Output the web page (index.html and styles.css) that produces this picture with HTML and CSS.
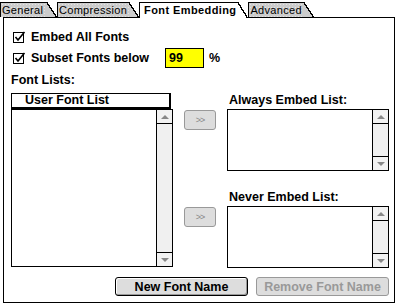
FILE: index.html
```html
<!DOCTYPE html>
<html lang="en">
<head>
    <meta charset="UTF-8">
    <title>Font Embedding</title>
    <link rel="stylesheet" href="styles.css">
</head>
<body>
    <div class="window">
        <div class="tabs">
            <div class="tab">General</div>
            <div class="tab">Compression</div>
            <div class="tab active">Font Embedding</div>
            <div class="tab">Advanced</div>
        </div>

        <div class="panel">
            <div class="check-row">
                <svg class="checkbox" width="13" height="13" viewBox="0 0 13 13">
                    <rect x="0.5" y="1.5" width="10" height="10" fill="#fff" stroke="#000"/>
                    <path d="M2.5 6 L5 9 L11.5 1" fill="none" stroke="#000" stroke-width="1.6"/>
                </svg>
                <span>Embed All Fonts</span>
            </div>
            <div class="check-row subset">
                <svg class="checkbox" width="13" height="13" viewBox="0 0 13 13">
                    <rect x="0.5" y="1.5" width="10" height="10" fill="#fff" stroke="#000"/>
                    <path d="M2.5 6 L5 9 L11.5 1" fill="none" stroke="#000" stroke-width="1.6"/>
                </svg>
                <span class="subset-label">Subset Fonts below</span>
                <span class="pct-field">99</span>
                <span class="pct">%</span>
            </div>

            <div class="section-label">Font Lists:</div>

            <div class="lists">
                <div class="col-left">
                    <div class="list-header">User Font List</div>
                    <div class="listbox tall">
                        <div class="list-body"></div>
                        <div class="scrollbar">
                            <div class="scroll-btn up"><span class="arrow"></span></div>
                            <div class="track"></div>
                            <div class="scroll-btn down"><span class="arrow"></span></div>
                        </div>
                    </div>
                </div>

                <div class="col-mid">
                    <button class="move">&gt;&gt;</button>
                    <button class="move second">&gt;&gt;</button>
                </div>

                <div class="col-right">
                    <div class="list-label">Always Embed List:</div>
                    <div class="listbox short">
                        <div class="list-body"></div>
                        <div class="scrollbar">
                            <div class="scroll-btn up"><span class="arrow"></span></div>
                            <div class="track"></div>
                            <div class="scroll-btn down"><span class="arrow"></span></div>
                        </div>
                    </div>
                    <div class="list-label never">Never Embed List:</div>
                    <div class="listbox short">
                        <div class="list-body"></div>
                        <div class="scrollbar">
                            <div class="scroll-btn up"><span class="arrow"></span></div>
                            <div class="track"></div>
                            <div class="scroll-btn down"><span class="arrow"></span></div>
                        </div>
                    </div>
                </div>
            </div>

            <div class="actions">
                <button class="push">New Font Name</button>
                <button class="push" disabled>Remove Font Name</button>
            </div>
        </div>
    </div>
</body>
</html>
```

FILE: styles.css
```css
body {
    margin: 0;
    padding: 0;
    background-color: #fff;
    font-family: "Liberation Sans", Arial, sans-serif;
    color: #000;
}

.window {
    width: 400px;
}

/* tab row */
.tabs {
    display: flex;
    align-items: flex-end;
    height: 18px;
    margin-bottom: -1px;
    position: relative;
    z-index: 1;
}

.tab {
    position: relative;
    box-sizing: border-box;
    height: 15px;
    margin-bottom: 1px;
    margin-right: 10px;
    padding: 0 2px 0 1px;
    border-top: 1px solid #000;
    border-left: 1px solid #000;
    font-size: 11px;
    line-height: 14px;
    letter-spacing: 0.3px;
    background-color: #cccccc;
    background-image: radial-gradient(#e4e4e4 0.7px, transparent 0.8px);
    background-size: 3px 3px;
    white-space: nowrap;
}

.tab::after {
    content: '';
    position: absolute;
    top: -1px;
    right: -10px;
    width: 10px;
    height: 15px;
    background: linear-gradient(to bottom left, #fff 48%, #000 48%, #000 56%, #cccccc 56%);
}

.tab:first-child {
    width: 47px;
}

.tab.active {
    height: 16px;
    margin-bottom: 0;
    padding-left: 4px;
    font-weight: bold;
    letter-spacing: 0.4px;
    background: #fff;
}

.tab.active::after {
    height: 16px;
    background: linear-gradient(to bottom left, #fff 48%, #000 48%, #000 56%, #fff 56%);
}

/* panel */
.panel {
    box-sizing: border-box;
    width: 392px;
    height: 286px;
    margin-left: 3px;
    padding: 0 5px 0 7px;
    border: 1px solid #000;
}

.check-row {
    display: flex;
    align-items: center;
    gap: 5px;
    height: 14px;
    margin-top: 12px;
    padding-left: 2px;
    font-size: 12.5px;
    font-weight: bold;
}

.check-row.subset {
    height: 20px;
    margin-top: 4px;
}

.checkbox {
    flex: none;
}

.subset-label {
    width: 129px;
}

.pct-field {
    box-sizing: border-box;
    width: 39px;
    height: 20px;
    padding-left: 3px;
    border: 1px solid #000;
    background-color: #ffff00;
    line-height: 18px;
}

.pct {
    margin-left: 0;
}

.section-label {
    height: 14px;
    margin-top: 5px;
    font-size: 12.5px;
    font-weight: bold;
    line-height: 14px;
}

/* list area */
.lists {
    display: grid;
    grid-template-columns: 162px 32px 162px;
    column-gap: 11px;
    margin-top: 6px;
}

.list-header {
    box-sizing: border-box;
    width: 160px;
    height: 16px;
    padding-left: 13px;
    border: 1px solid #000;
    border-right-width: 2px;
    border-bottom-width: 2px;
    font-size: 12.5px;
    font-weight: bold;
    line-height: 13px;
}

.listbox {
    box-sizing: border-box;
    display: flex;
    border: 1px solid #000;
    background-color: #fff;
}

.listbox.tall {
    height: 158px;
}

.listbox.short {
    height: 62px;
}

.list-body {
    flex: 1;
}

.scrollbar {
    display: flex;
    flex-direction: column;
    width: 15px;
    border-left: 1px solid #000;
}

.scroll-btn {
    display: flex;
    align-items: center;
    justify-content: center;
    height: 13px;
    background-color: #f2f2f2;
}

.scroll-btn.up {
    border-bottom: 1px solid #000;
}

.scroll-btn.down {
    border-top: 1px solid #000;
}

.arrow {
    width: 0;
    height: 0;
    border-left: 4px solid transparent;
    border-right: 4px solid transparent;
}

.up .arrow {
    border-bottom: 4px solid #888;
}

.down .arrow {
    border-top: 4px solid #888;
}

.track {
    flex: 1;
    background-color: #f0f0f0;
    background-image: radial-gradient(#d2d2d2 0.6px, transparent 0.7px);
    background-size: 4px 4px;
}

.col-mid {
    display: flex;
    flex-direction: column;
    padding-top: 17px;
}

.move {
    box-sizing: border-box;
    width: 32px;
    height: 20px;
    padding: 0;
    border: 1px solid #999;
    border-radius: 3px;
    background-color: #dddddd;
    color: #888;
    font-family: "Liberation Sans", Arial, sans-serif;
    font-size: 9px;
    letter-spacing: -1px;
}

.move.second {
    margin-top: 77px;
}

.list-label {
    height: 16px;
    padding-left: 2px;
    font-size: 12.5px;
    font-weight: bold;
    line-height: 15px;
}

.list-label.never {
    margin-top: 19px;
}

/* bottom buttons */
.actions {
    display: flex;
    justify-content: flex-end;
    gap: 8px;
    margin-top: 9px;
}

.push {
    box-sizing: border-box;
    width: 133px;
    height: 19px;
    padding: 0;
    border: 1px solid #000;
    border-radius: 3px;
    background-color: #dddddd;
    box-shadow: inset -1px -1px 0 #999, inset 1px 1px 0 #fff;
    font-family: "Liberation Sans", Arial, sans-serif;
    font-size: 12.5px;
    font-weight: bold;
    color: #000;
}

.push:disabled {
    border-color: #999;
    box-shadow: none;
    color: #999;
}
```
